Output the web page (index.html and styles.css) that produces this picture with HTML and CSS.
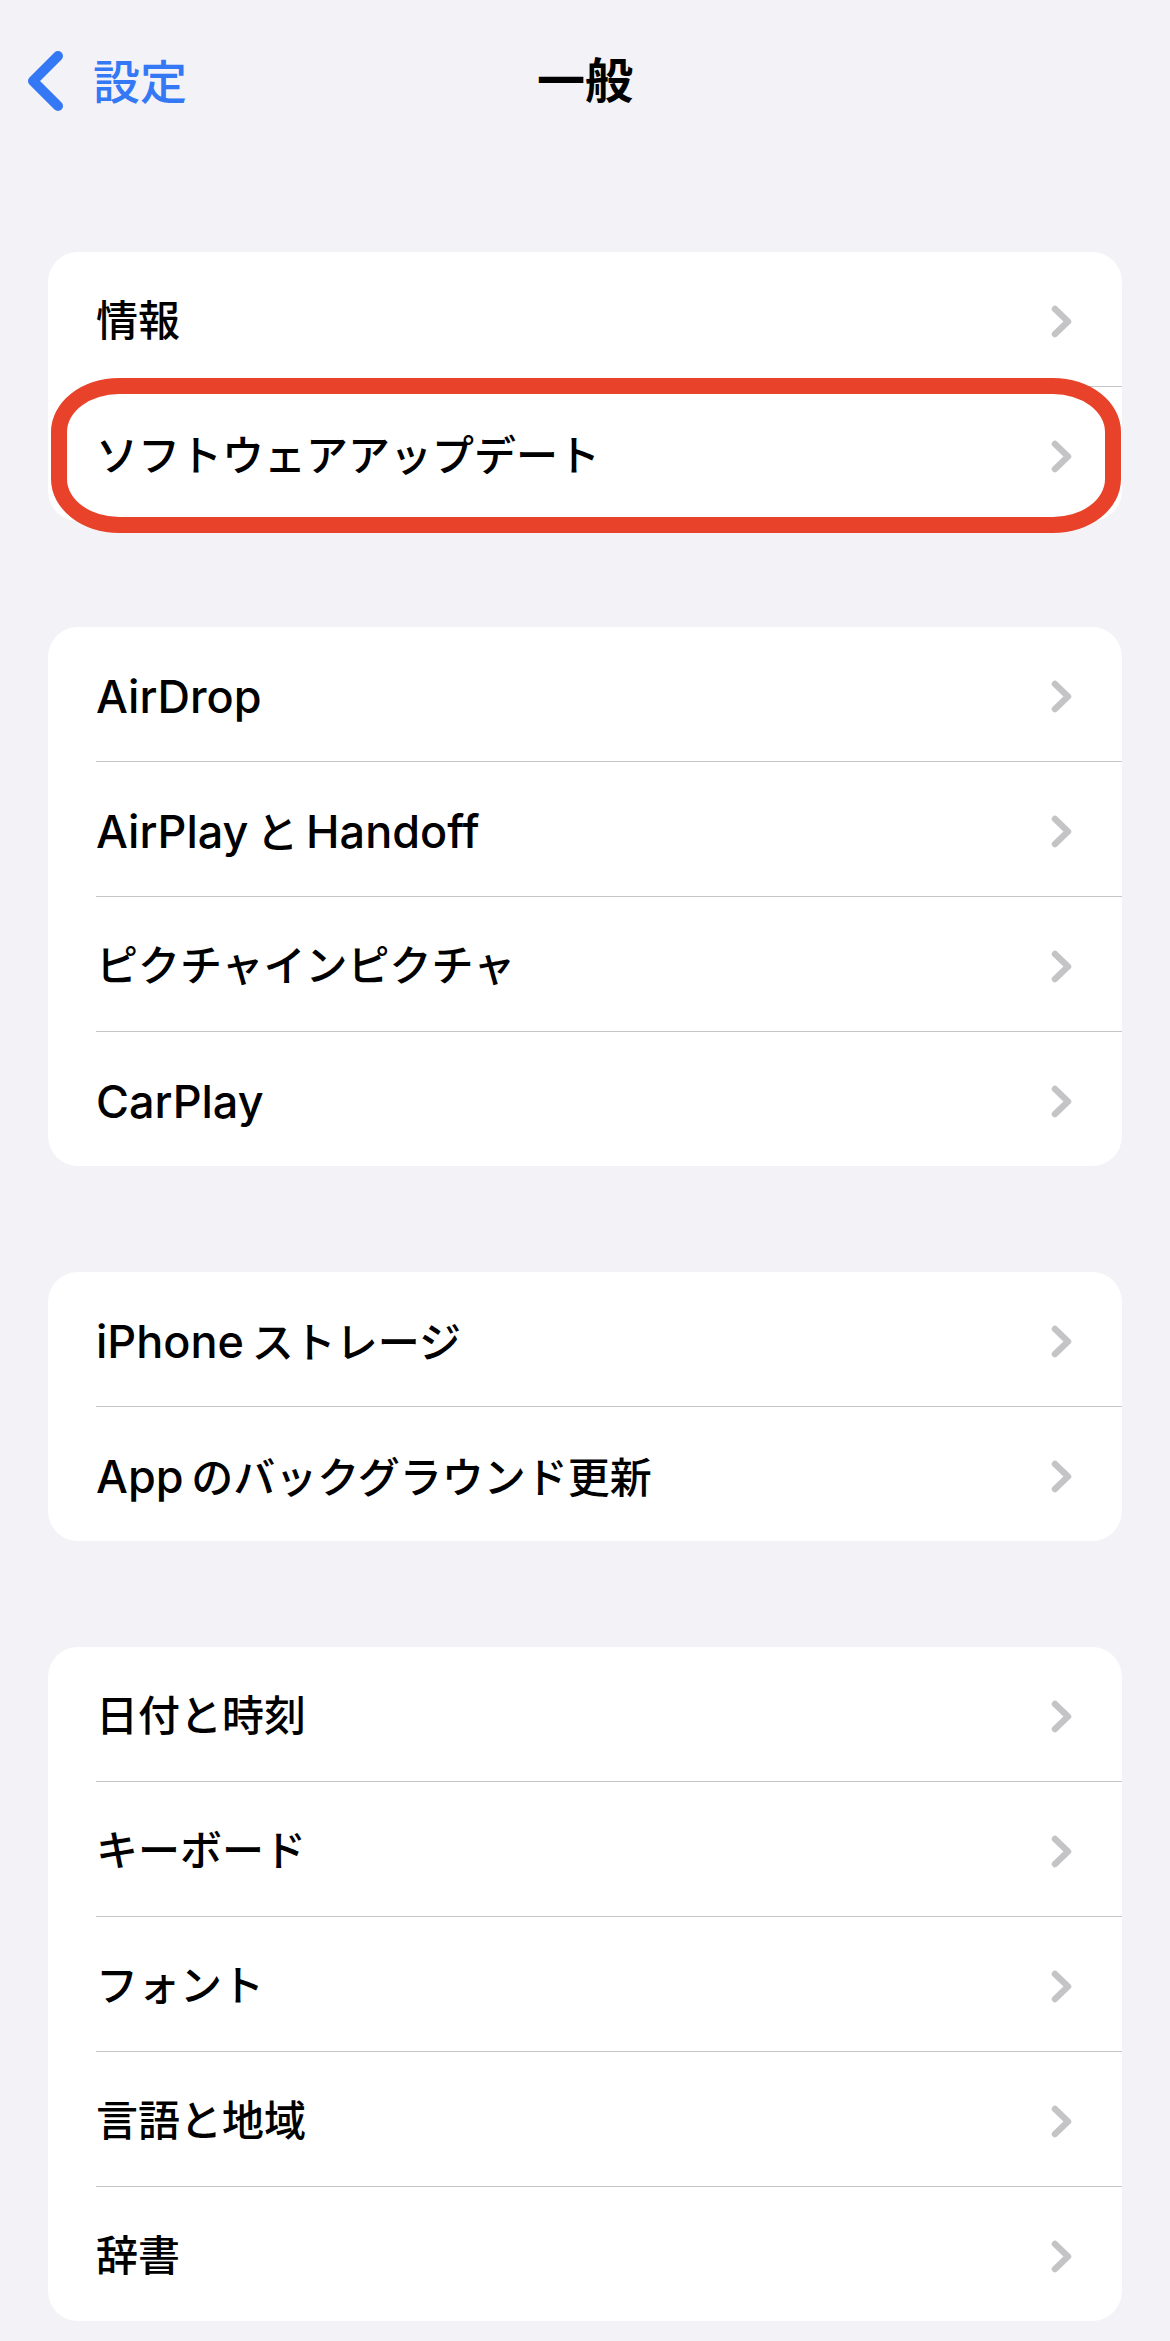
FILE: index.html
```html
<!DOCTYPE html>
<html lang="ja">
<head>
    <meta charset="UTF-8">
    <meta name="viewport" content="width=device-width, initial-scale=1.0">
    <title>一般</title>
    <link rel="stylesheet" href="styles.css">
</head>
<body>
    <header class="navbar">
        <a class="back" href="#">
            <svg class="back-icon" width="36" height="60" viewBox="0 0 36 60"><path d="M31 5 L6 30 L31 55"/></svg>
            <span>設定</span>
        </a>
        <h1 class="title">一般</h1>
        <span></span>
    </header>

    <main class="list">
        <section class="group">
            <div class="row"><div class="row-body"><span class="label">情報</span><svg class="chev" width="21" height="33" viewBox="0 0 21 33"><path d="M4 4 L17 16.5 L4 29"/></svg></div></div>
            <div class="row">
                <div class="row-body"><span class="label">ソフトウェアアップデート</span><svg class="chev" width="21" height="33" viewBox="0 0 21 33"><path d="M4 4 L17 16.5 L4 29"/></svg></div>
                <!-- red annotation ring -->
                <div class="ring"></div>
            </div>
        </section>

        <section class="group">
            <div class="row"><div class="row-body"><span class="label"><span class="en">AirDrop</span></span><svg class="chev" width="21" height="33" viewBox="0 0 21 33"><path d="M4 4 L17 16.5 L4 29"/></svg></div></div>
            <div class="row"><div class="row-body"><span class="label"><span class="en">AirPlay&thinsp;</span>と<span class="en">&thinsp;Handoff</span></span><svg class="chev" width="21" height="33" viewBox="0 0 21 33"><path d="M4 4 L17 16.5 L4 29"/></svg></div></div>
            <div class="row"><div class="row-body"><span class="label">ピクチャインピクチャ</span><svg class="chev" width="21" height="33" viewBox="0 0 21 33"><path d="M4 4 L17 16.5 L4 29"/></svg></div></div>
            <div class="row"><div class="row-body"><span class="label"><span class="en">CarPlay</span></span><svg class="chev" width="21" height="33" viewBox="0 0 21 33"><path d="M4 4 L17 16.5 L4 29"/></svg></div></div>
        </section>

        <section class="group">
            <div class="row"><div class="row-body"><span class="label"><span class="en">iPhone&thinsp;</span>ストレージ</span><svg class="chev" width="21" height="33" viewBox="0 0 21 33"><path d="M4 4 L17 16.5 L4 29"/></svg></div></div>
            <div class="row"><div class="row-body"><span class="label"><span class="en">App&thinsp;</span>のバックグラウンド更新</span><svg class="chev" width="21" height="33" viewBox="0 0 21 33"><path d="M4 4 L17 16.5 L4 29"/></svg></div></div>
        </section>

        <section class="group">
            <div class="row"><div class="row-body"><span class="label">日付と時刻</span><svg class="chev" width="21" height="33" viewBox="0 0 21 33"><path d="M4 4 L17 16.5 L4 29"/></svg></div></div>
            <div class="row"><div class="row-body"><span class="label">キーボード</span><svg class="chev" width="21" height="33" viewBox="0 0 21 33"><path d="M4 4 L17 16.5 L4 29"/></svg></div></div>
            <div class="row"><div class="row-body"><span class="label">フォント</span><svg class="chev" width="21" height="33" viewBox="0 0 21 33"><path d="M4 4 L17 16.5 L4 29"/></svg></div></div>
            <div class="row"><div class="row-body"><span class="label">言語と地域</span><svg class="chev" width="21" height="33" viewBox="0 0 21 33"><path d="M4 4 L17 16.5 L4 29"/></svg></div></div>
            <div class="row"><div class="row-body"><span class="label">辞書</span><svg class="chev" width="21" height="33" viewBox="0 0 21 33"><path d="M4 4 L17 16.5 L4 29"/></svg></div></div>
        </section>
    </main>
</body>
</html>
```

FILE: styles.css
```css
body {
    margin: 0;
    background-color: #f2f2f7;
    color: #000;
    font-family: "Inter", "Noto Sans CJK JP", sans-serif;
}
.navbar {
    height: 162px;
    display: grid;
    grid-template-columns: 1fr auto 1fr;
    align-items: center;
}
.back {
    display: flex;
    align-items: center;
    gap: 30px;
    padding-left: 27px;
    color: #3478f6;
    text-decoration: none;
    font-size: 47px;
    font-weight: 500;
    line-height: 1;
}
.back-icon path {
    fill: none;
    stroke: #3478f6;
    stroke-width: 10;
    stroke-linecap: round;
    stroke-linejoin: round;
}
.title {
    margin: 0;
    font-size: 48px;
    font-weight: 700;
    line-height: 1;
}
.list {
    display: flex;
    flex-direction: column;
    gap: 106px;
    padding: 90px 48px 0;
}
.group {
    background-color: #fff;
    border-radius: 30px;
}
.row {
    position: relative;
    padding-left: 48px;
}
.row-body {
    box-sizing: border-box;
    height: 135px;
    padding: 5px 50px 0 0;
    display: flex;
    align-items: center;
    justify-content: space-between;
    border-bottom: 1px solid #c6c6c8;
}
.row:last-child .row-body {
    height: 134px;
    border-bottom: none;
}
.label {
    font-size: 42px;
    font-weight: 500;
    line-height: 1.2;
}
.en {
    font-size: 45px;
}
.chev path {
    fill: none;
    stroke: #c4c4c6;
    stroke-width: 6.5;
    stroke-linecap: round;
    stroke-linejoin: round;
}
.ring {
    position: absolute;
    top: -9px;
    left: 3px;
    width: 1070px;
    height: 155px;
    box-sizing: border-box;
    border: 16px solid #e8432a;
    border-radius: 68px / 54px;
    pointer-events: none;
}
```
